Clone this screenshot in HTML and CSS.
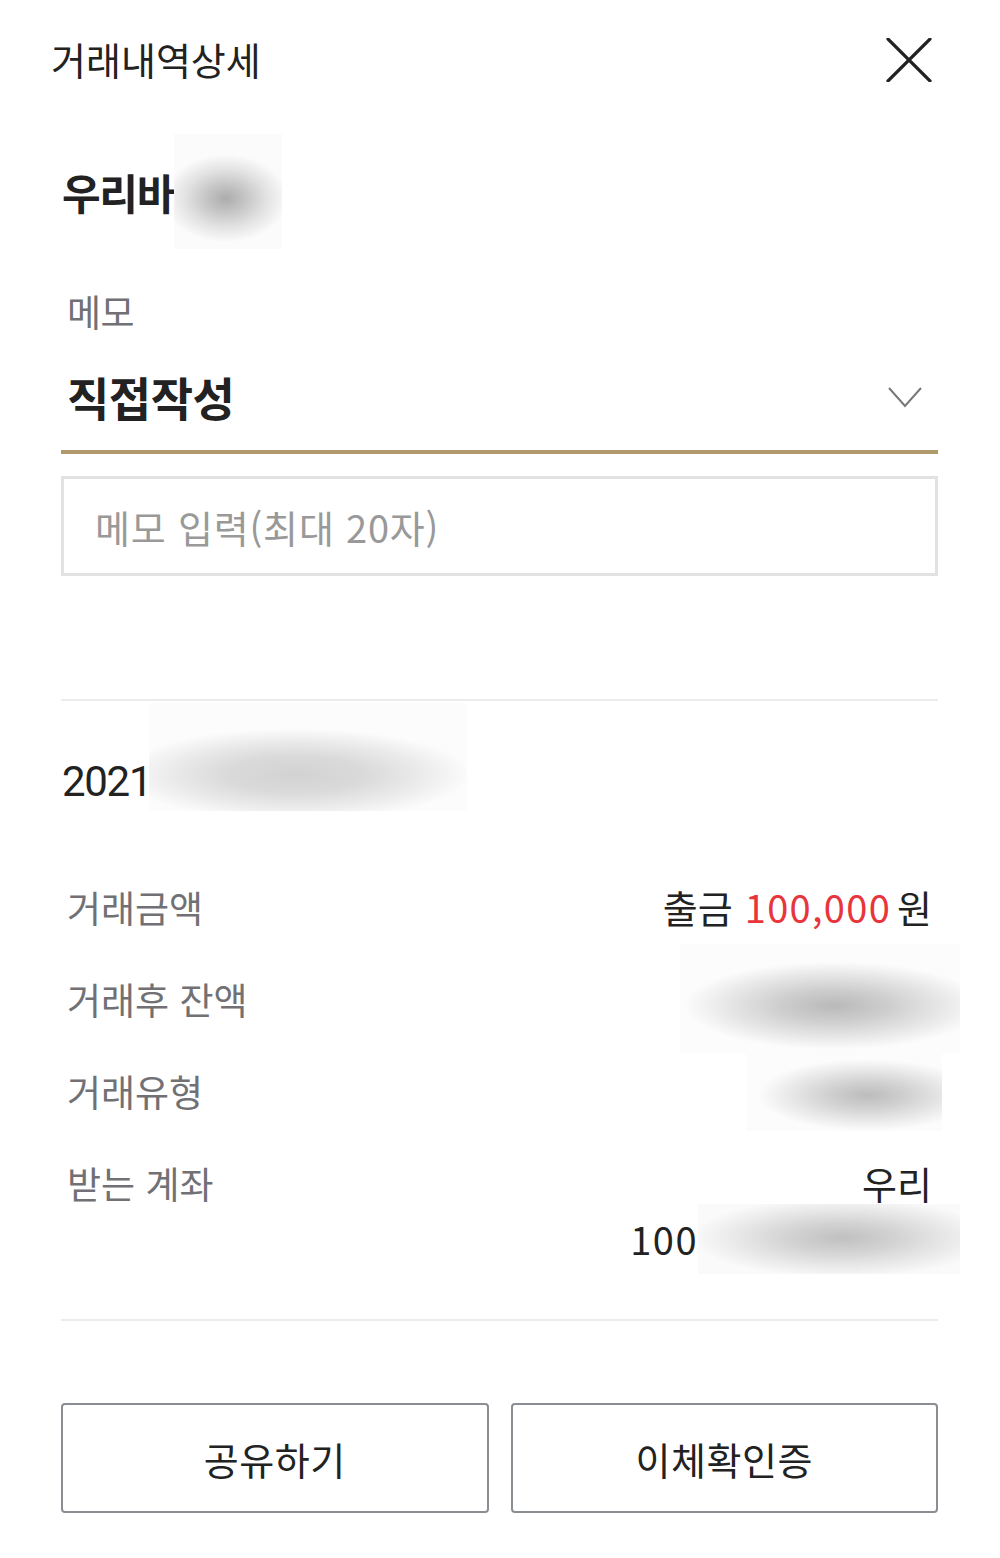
FILE: index.html
```html
<!DOCTYPE html>
<html lang="ko">
<head>
<meta charset="utf-8">
<title>거래내역상세</title>
<link rel="stylesheet" href="styles.css">
</head>
<body>
<div class="page">
  <header class="header">
    <h1 class="title">거래내역상세</h1>
    <button class="close" aria-label="닫기">
      <svg width="46" height="44" viewBox="0 0 46 44"><path d="M2 1 L44 43 M44 1 L2 43" stroke="#222" stroke-width="3.2" fill="none" stroke-linecap="round"/></svg>
    </button>
  </header>

  <div class="content">
    <div class="bank"><span class="bank-name">우리바</span><span class="blur blur-bank"></span></div>

    <div class="memo-label">메모</div>
    <div class="select">
      <span class="select-value">직접작성</span>
      <svg class="chevron" width="34" height="22" viewBox="0 0 34 22"><path d="M1 2 L17 20 L33 2" stroke="#777" stroke-width="2" fill="none"/></svg>
    </div>
    <div class="memo-input">메모 입력(최대 20자)</div>

    <div class="divider first"></div>

    <div class="date"><span>2021</span><span class="blur blur-date"></span></div>

    <div class="rows">
      <div class="row">
        <span class="label">거래금액</span>
        <span class="value"><span class="out">출금</span><span class="red">100,000</span><span class="won">원</span></span>
      </div>
      <div class="row">
        <span class="label">거래후 잔액</span>
        <span class="value"><span class="blur blur-balance"></span></span>
      </div>
      <div class="row">
        <span class="label">거래유형</span>
        <span class="value"><span class="blur blur-type"></span></span>
      </div>
      <div class="row">
        <span class="label">받는 계좌</span>
        <span class="value multi">
          <span class="line">우리</span>
          <span class="line"><span class="digits">100</span><span class="blur blur-acct"></span></span>
        </span>
      </div>
    </div>

    <div class="divider second"></div>

    <div class="buttons">
      <button class="btn">공유하기</button>
      <button class="btn">이체확인증</button>
    </div>
  </div>
</div>
</body>
</html>
```

FILE: styles.css
```css
* { box-sizing: border-box; }
html, body { margin: 0; padding: 0; background: #fff; }
body {
  font-family: "Noto Sans CJK KR", "Noto Sans", sans-serif;
  color: #222;
}
.page { width: 1000px; }

.header {
  height: 122px;
  display: flex;
  align-items: center;
  justify-content: space-between;
  padding: 0 68px 0 51px;
}
.title {
  margin: 0;
  font-size: 38px;
  font-weight: 400;
  letter-spacing: 0;
  color: #222;
  line-height: 1;
  margin-top: -4px;
}
.close {
  border: 0; background: none; padding: 0; margin: -2px 0 0 0;
  width: 46px; height: 44px;
  display: block;
}
.close svg { display: block; }

.content { padding: 0 62px 0 61px; }

.bank {
  height: 138px;
  display: flex;
  align-items: center;
}
.bank-name {
  font-size: 42px;
  font-weight: 700;
  letter-spacing: -1.3px;
  color: #222;
  padding-left: 1px;
}
.blur { display: inline-block; flex: none; }
.blur-bank {
  width: 108px;
  height: 115px;
  margin-left: 0;
  background: radial-gradient(ellipse 62px 44px at 48% 56%, #acacac 0%, #c4c4c4 30%, #e2e2e2 65%, #fbfbfb 100%) #fdfdfd;
}

.memo-label {
  margin-top: 26px;
  line-height: 50px;
  height: 50px;
  font-size: 37px;
  letter-spacing: -0.5px;
  color: #707075;
  padding-left: 6px;
}
.select {
  margin-top: 30px;
  height: 88px;
  padding: 0 16px 24px 6px;
  border-bottom: 4px solid #b09a6c;
  display: flex;
  align-items: center;
  justify-content: space-between;
}
.select-value {
  font-size: 46px;
  font-weight: 700;
  letter-spacing: -0.5px;
  color: #222;
}
.chevron { display: block; margin-top: 2px; }

.memo-input {
  margin-top: 22px;
  height: 100px;
  border: 3px solid #e2e2e2;
  display: flex;
  align-items: center;
  padding-left: 31px;
  font-size: 38px;
  letter-spacing: 0.8px;
  color: #999;
}

.divider { height: 2px; background: #ececec; }
.divider.first { margin-top: 123px; }
.divider.second { margin-top: 34px; }

.date {
  margin-top: 1px;
  height: 110px;
  display: flex;
  align-items: center;
  font-family: Roboto, "Noto Sans CJK KR", sans-serif;
  font-size: 42px;
  letter-spacing: -1.3px;
  color: #222;
  padding-top: 48px;
}
.date > span:first-child { padding-left: 1px; }
.blur-date {
  width: 318px;
  height: 108px;
  margin-top: -48px;
  margin-left: -2px;
  background: radial-gradient(ellipse 175px 46px at 46% 66%, #d2d2d2 0%, #dadada 40%, #ebebeb 72%, #fcfcfc 100%) #fdfdfd;
}

.rows { margin-top: 49px; }
.row {
  display: flex;
  justify-content: space-between;
  align-items: flex-start;
  padding: 18px 6px 18px 6px;
  line-height: 56px;
}
.label {
  font-size: 37px;
  letter-spacing: 0;
  color: #707075;
}
.value {
  font-size: 38px;
  letter-spacing: 0;
  color: #222;
  display: flex;
  align-items: center;
  height: 56px;
}
.value .out { margin-right: 12px; }
.value .red { color: #e8343b; letter-spacing: 1.3px; margin-right: 6px; }
.value.multi {
  height: auto;
  flex-direction: column;
  align-items: flex-end;
}
.value .line { display: flex; align-items: center; height: 56px; }
.value .digits { letter-spacing: 1.5px; }
.blur-balance {
  width: 280px;
  height: 110px;
  margin-right: -28px;
  background: radial-gradient(ellipse 150px 44px at 55% 56%, #b9b9b9 0%, #cdcdcd 35%, #e6e6e6 70%, #fcfcfc 100%) #fefefe;
}
.blur-type {
  width: 196px;
  height: 80px;
  margin-right: -10px;
  background: radial-gradient(ellipse 110px 36px at 62% 55%, #bcbcbc 0%, #d0d0d0 35%, #e8e8e8 70%, #fcfcfc 100%) #fefefe;
}
.blur-acct {
  width: 262px;
  height: 70px;
  margin-right: -28px;
  background: radial-gradient(ellipse 150px 40px at 55% 48%, #c0c0c0 0%, #d2d2d2 35%, #e8e8e8 70%, #fafafa 100%) #fcfcfc;
}

.buttons {
  margin-top: 82px;
  display: flex;
  gap: 22px;
}
.btn {
  flex: 1;
  height: 110px;
  background: #fff;
  border: 2.5px solid #8a8d91;
  border-radius: 4px;
  font-family: "Noto Sans CJK KR", sans-serif;
  font-size: 38px;
  letter-spacing: 0.5px;
  color: #222;
  padding: 0;
}
```
